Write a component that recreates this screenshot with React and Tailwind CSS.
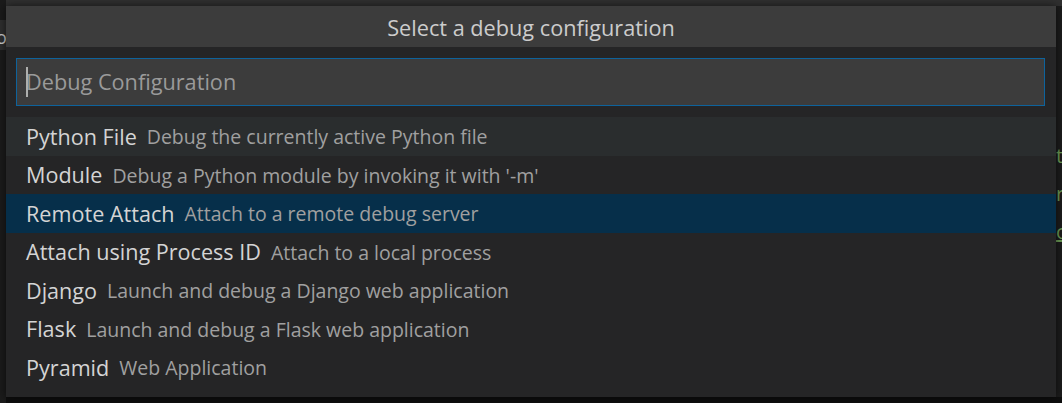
import React from 'react';

const items = [
  { label: 'Python File', desc: 'Debug the currently active Python file', state: 'hover' },
  { label: 'Module', desc: "Debug a Python module by invoking it with '-m'" },
  { label: 'Remote Attach', desc: 'Attach to a remote debug server', state: 'selected' },
  { label: 'Attach using Process ID', desc: 'Attach to a local process' },
  { label: 'Django', desc: 'Launch and debug a Django web application' },
  { label: 'Flask', desc: 'Launch and debug a Flask web application' },
  { label: 'Pyramid', desc: 'Web Application' },
];

function Row({ label, desc, state }) {
  const bg =
    state === 'selected' ? 'bg-[#062f4a]' : state === 'hover' ? 'bg-[#2a2d2e]' : 'bg-transparent';
  return (
    <div className={`${bg} h-[38.5px] flex items-center pl-5 pt-[1px] whitespace-nowrap`}>
      <span className="text-[21.6px] text-[#d4d4d4]">{label}</span>
      <span className="text-[19.5px] text-[#a0a0a0] ml-[10px]">{desc}</span>
    </div>
  );
}

export default function App() {
  return (
    <div
      className="relative w-[1062px] h-[403px] overflow-hidden bg-[#0e0e0e]"
      style={{ fontFamily: '"Open Sans", "Noto Sans", sans-serif' }}
    >
      {/* editor bits behind the quick pick */}
      <div className="absolute left-0 top-0 w-[1062px] h-[6px] bg-[#303030]" />
      <div className="absolute left-0 top-0 w-[6px] h-[403px] bg-[#1b1b1b]" />
      <div className="absolute left-0 top-[20px] w-[6px] h-[30px] bg-[#2e2e2e]" />
      <div className="absolute left-[-4px] top-[28px] text-[18px] text-[#c8c8c8] leading-none">o</div>
      <div className="absolute right-0 top-[6px] w-[6px] h-[391px] bg-[#1c1c1c]" />
      <div className="absolute left-[1056px] top-[137px] text-[20px] text-[#6a9955] leading-[38px] flex flex-col">
        <span>t</span>
        <span>r</span>
        <span className="underline">o</span>
      </div>

      {/* quick pick */}
      <div className="absolute left-[6px] top-[6px] w-[1050px] h-[391px] bg-[#252526] shadow-[0_0_8px_rgba(0,0,0,0.6)] flex flex-col">
        <div className="h-[41px] bg-[#3c3c3c] flex items-center justify-center pt-[3px] text-[21.7px] text-[#cccccc]">
          Select a debug configuration
        </div>
        <div className="px-[10px] pt-[11px] pr-[11px]">
          <div className="h-[48px] bg-[#3c3c3c] border border-[#0e639c] flex items-center pl-[9px] relative">
            <span className="w-[2px] h-[30px] bg-[#aeafad] absolute left-[9px] top-[8px]" />
            <span className="text-[21.7px] text-[#9a9a9a]">Debug Configuration</span>
          </div>
        </div>
        <div className="mt-[11px] flex flex-col">
          {items.map((it) => (
            <Row key={it.label} {...it} />
          ))}
        </div>
      </div>
    </div>
  );
}
